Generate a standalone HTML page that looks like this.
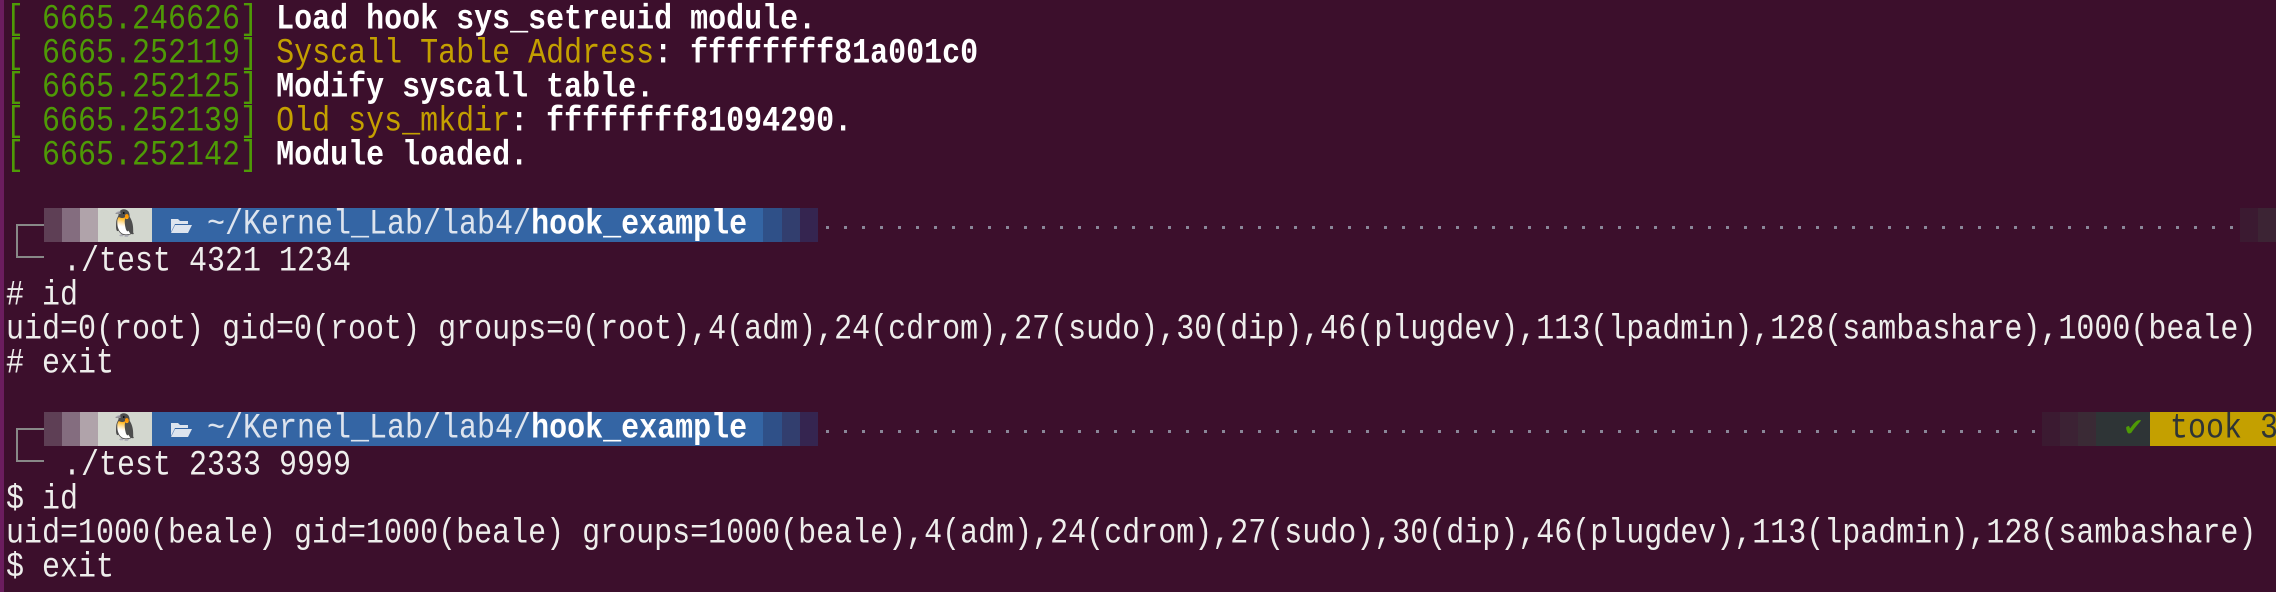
<!DOCTYPE html>
<html><head><meta charset="utf-8"><style>
html,body{margin:0;padding:0;}
body{width:2276px;height:592px;background:#3c0f2c;position:relative;overflow:hidden;font-family:"Liberation Mono","DejaVu Sans Mono",monospace;font-size:30px;color:#eeeeec;}
.r{position:absolute;left:6px;height:34px;line-height:34px;white-space:pre;transform:scaleY(1.18);transform-origin:0 50%;}
.g{color:#4e9a06}.y{color:#c4a000}.b{font-weight:bold;color:#fff}
.seg{position:absolute;height:34px;}
.dots{position:absolute;height:3px;background-image:linear-gradient(90deg,#8a8698 0 3px,transparent 3px);background-size:18px 3px;}
.pt{position:absolute;left:55px;transform:scaleY(1.18);transform-origin:0 50%;}
</style></head><body>
<div style="position:absolute;left:0;top:0;width:4px;height:592px;background:#6b1d5e"></div>
<div class="r" style="top:3px"><span class="g">[ 6665.246626]</span> <span class="b">Load hook sys_setreuid module.</span></div>
<div class="r" style="top:37px"><span class="g">[ 6665.252119]</span> <span class="y">Syscall Table Address</span><span class="b">: ffffffff81a001c0</span></div>
<div class="r" style="top:71px"><span class="g">[ 6665.252125]</span> <span class="b">Modify syscall table.</span></div>
<div class="r" style="top:105px"><span class="g">[ 6665.252139]</span> <span class="y">Old sys_mkdir</span><span class="b">: ffffffff81094290.</span></div>
<div class="r" style="top:139px"><span class="g">[ 6665.252142]</span> <span class="b">Module loaded.</span></div>

<!-- prompt 1 -->
<div style="position:absolute;left:16px;top:224px;width:28px;height:34px;border:2px solid #888;border-right:none;box-sizing:border-box"></div>
<div class="seg" style="left:44px;top:208px;width:18px;background:#5e3f55"></div>
<div class="seg" style="left:62px;top:208px;width:18px;background:#846d7f"></div>
<div class="seg" style="left:80px;top:208px;width:18px;background:#b0a3aa"></div>
<div class="seg" style="left:98px;top:208px;width:54px;background:#d3d7cf;text-align:center;line-height:34px;font-size:26px;color:#222">🐧</div>
<div class="seg" style="left:152px;top:208px;width:611px;background:#3465a4;line-height:34px;white-space:pre;color:#dde4ee"><svg style="position:absolute;left:18px;top:9px" width="22" height="16" viewBox="0 0 22 16"><path d="M1 2h7l2 2h8v3H5L1 15z" fill="#dde4ee"/><path d="M5 8h17l-4 8H1z" fill="#dde4ee"/></svg><span class="pt">~/Kernel_Lab/lab4/<b style="color:#fff">hook_example</b></span></div>
<div class="seg" style="left:763px;top:208px;width:19px;background:#2f5088"></div>
<div class="seg" style="left:782px;top:208px;width:18px;background:#323e6e"></div>
<div class="seg" style="left:800px;top:208px;width:18px;background:#352550"></div>
<div class="dots" style="left:826px;top:226px;width:1416px"></div>
<div class="seg" style="left:2240px;top:208px;width:18px;background:#3b1a31"></div>
<div class="seg" style="left:2258px;top:208px;width:18px;background:#3c2434"></div>
<div class="r" style="top:245px;left:63px">./test 4321 1234</div>
<div class="r" style="top:279px"># id</div>
<div class="r" style="top:313px">uid=0(root) gid=0(root) groups=0(root),4(adm),24(cdrom),27(sudo),30(dip),46(plugdev),113(lpadmin),128(sambashare),1000(beale)</div>
<div class="r" style="top:347px"># exit</div>

<!-- prompt 2 -->
<div style="position:absolute;left:16px;top:428px;width:28px;height:34px;border:2px solid #888;border-right:none;box-sizing:border-box"></div>
<div class="seg" style="left:44px;top:412px;width:18px;background:#5e3f55"></div>
<div class="seg" style="left:62px;top:412px;width:18px;background:#846d7f"></div>
<div class="seg" style="left:80px;top:412px;width:18px;background:#b0a3aa"></div>
<div class="seg" style="left:98px;top:412px;width:54px;background:#d3d7cf;text-align:center;line-height:34px;font-size:26px;color:#222">🐧</div>
<div class="seg" style="left:152px;top:412px;width:611px;background:#3465a4;line-height:34px;white-space:pre;color:#dde4ee"><svg style="position:absolute;left:18px;top:9px" width="22" height="16" viewBox="0 0 22 16"><path d="M1 2h7l2 2h8v3H5L1 15z" fill="#dde4ee"/><path d="M5 8h17l-4 8H1z" fill="#dde4ee"/></svg><span class="pt">~/Kernel_Lab/lab4/<b style="color:#fff">hook_example</b></span></div>
<div class="seg" style="left:763px;top:412px;width:19px;background:#2f5088"></div>
<div class="seg" style="left:782px;top:412px;width:18px;background:#323e6e"></div>
<div class="seg" style="left:800px;top:412px;width:18px;background:#352550"></div>
<div class="dots" style="left:826px;top:430px;width:1210px"></div>
<div class="seg" style="left:2042px;top:412px;width:18px;background:#3b1a31"></div>
<div class="seg" style="left:2060px;top:412px;width:18px;background:#3c2234"></div>
<div class="seg" style="left:2078px;top:412px;width:18px;background:#3a2a35"></div>
<div class="seg" style="left:2096px;top:412px;width:54px;background:#2e3436;color:#4e9a06;line-height:34px;text-align:right;padding-right:8px;box-sizing:border-box;font-size:28px">✔</div>
<div class="seg" style="left:2150px;top:412px;width:126px;background:#c4a000;color:#2e3436;line-height:34px;white-space:pre;padding-left:20px;box-sizing:border-box"><span style="display:inline-block;transform:scaleY(1.18)">took 3</span></div>
<div class="r" style="top:449px;left:63px">./test 2333 9999</div>
<div class="r" style="top:483px">$ id</div>
<div class="r" style="top:517px">uid=1000(beale) gid=1000(beale) groups=1000(beale),4(adm),24(cdrom),27(sudo),30(dip),46(plugdev),113(lpadmin),128(sambashare)</div>
<div class="r" style="top:551px">$ exit</div>
</body></html>
